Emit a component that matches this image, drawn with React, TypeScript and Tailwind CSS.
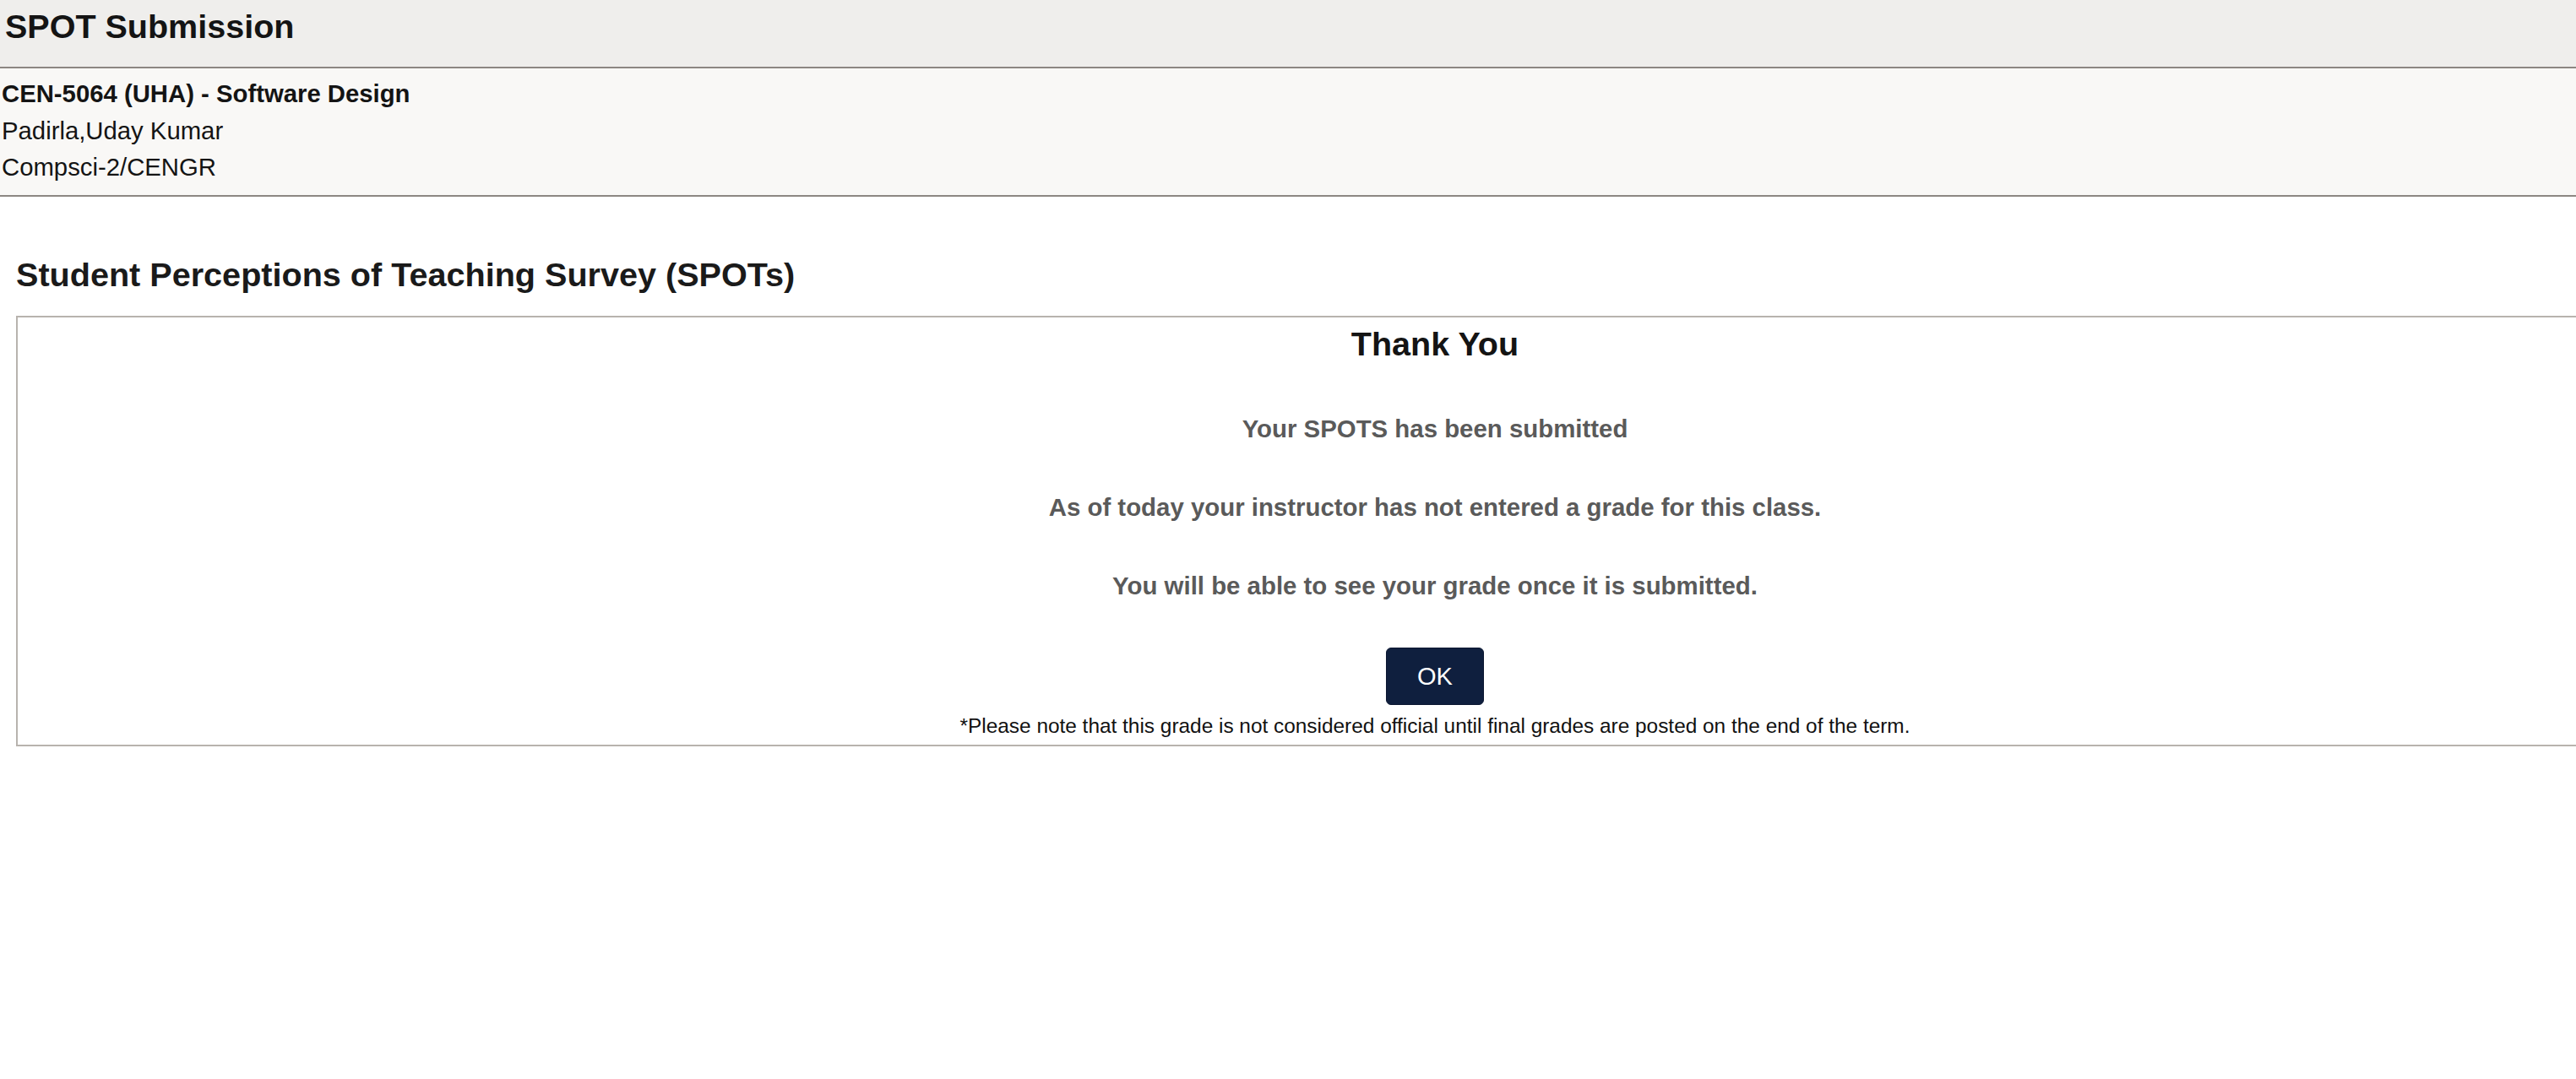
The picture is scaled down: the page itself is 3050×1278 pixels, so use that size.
export default function App() {
  return (
    <div className="min-h-screen w-full overflow-hidden bg-white text-[#141414] font-[family-name:Liberation_Sans,Arial,sans-serif]">
      {/* Page header */}
      <div className="h-[79px] bg-[#efeeec] pl-[6px]">
        <h1 className="text-[39.5px] font-bold leading-[62px]">SPOT Submission</h1>
      </div>

      {/* Class info */}
      <div className="h-[154px] border-y-2 border-[#8c8782] bg-[#f9f8f6] pl-[2px] pt-[8px] text-[29.3px] leading-[43.5px]">
        <div className="font-bold">CEN-5064 (UHA) - Software Design</div>
        <div>Padirla,Uday Kumar</div>
        <div>Compsci-2/CENGR</div>
      </div>

      {/* Survey */}
      <div className="px-[19px] pt-[68px]">
        <h2 className="text-[39.6px] font-bold leading-[48px] text-[#1a1a1a]">
          Student Perceptions of Teaching Survey (SPOTs)
        </h2>

        <div className="mt-[25px] w-[3360px] border-2 border-[#b8b3ae] pt-[8px] pb-[10px] text-center">
          <h3 className="text-[39.5px] font-bold leading-[46px] text-[#141414]">Thank You</h3>
          <p className="mt-[61px] text-[29.4px] font-bold leading-[34px] text-[#5a5a5a]">
            Your SPOTS has been submitted
          </p>
          <p className="mt-[59px] text-[29.4px] font-bold leading-[34px] text-[#5a5a5a]">
            As of today your instructor has not entered a grade for this class.
          </p>
          <p className="mt-[59px] text-[29.4px] font-bold leading-[34px] text-[#5a5a5a]">
            You will be able to see your grade once it is submitted.
          </p>
          <div className="mt-[56px] flex justify-center">
            <button className="h-[68px] w-[116px] rounded-[6px] border border-[#0a1630] bg-[#0f1f3e] text-[29px] leading-none text-white">
              OK
            </button>
          </div>
          <p className="mt-[12px] text-[24.4px] leading-[25px] text-[#111111]">
            *Please note that this grade is not considered official until final grades are posted on the end of the term.
          </p>
        </div>
      </div>
    </div>
  )
}
